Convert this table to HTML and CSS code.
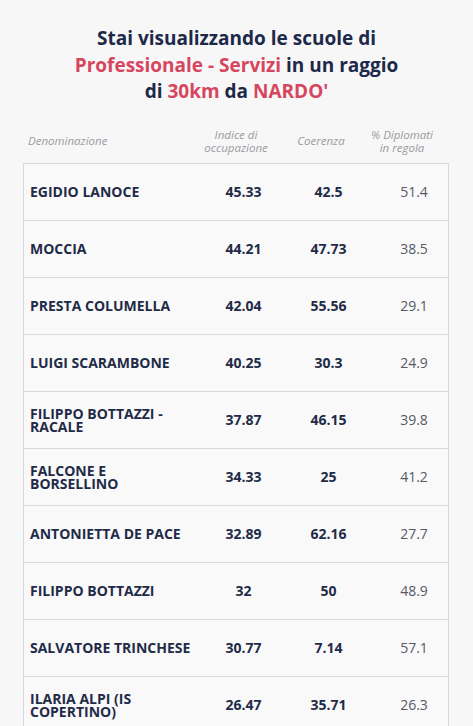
FILE: index.html
```html
<!DOCTYPE html>
<html lang="it">
<head>
    <meta charset="UTF-8">
    <meta name="viewport" content="width=device-width, initial-scale=1.0">
    <title>Scuole vicine</title>
    <link rel="stylesheet" href="styles.css">
</head>
<body>
    <h1 class="title">
        Stai visualizzando le scuole di<br>
        <span class="accent">Professionale - Servizi</span> in un raggio<br>
        di <span class="accent">30km</span> da <span class="accent">NARDO'</span>
    </h1>

    <div class="table">
        <div class="table-head">
            <div class="th th-name">Denominazione</div>
            <div class="th">Indice di<br>occupazione</div>
            <div class="th">Coerenza</div>
            <div class="th">% Diplomati<br>in regola</div>
        </div>

        <div class="table-body">
            <div class="row">
                <div class="name">EGIDIO LANOCE</div>
                <div class="val">45.33</div>
                <div class="val">42.5</div>
                <div class="val val-light">51.4</div>
            </div>
            <div class="row">
                <div class="name">MOCCIA</div>
                <div class="val">44.21</div>
                <div class="val">47.73</div>
                <div class="val val-light">38.5</div>
            </div>
            <div class="row">
                <div class="name">PRESTA COLUMELLA</div>
                <div class="val">42.04</div>
                <div class="val">55.56</div>
                <div class="val val-light">29.1</div>
            </div>
            <div class="row">
                <div class="name">LUIGI SCARAMBONE</div>
                <div class="val">40.25</div>
                <div class="val">30.3</div>
                <div class="val val-light">24.9</div>
            </div>
            <div class="row">
                <div class="name">FILIPPO BOTTAZZI - RACALE</div>
                <div class="val">37.87</div>
                <div class="val">46.15</div>
                <div class="val val-light">39.8</div>
            </div>
            <div class="row">
                <div class="name">FALCONE E BORSELLINO</div>
                <div class="val">34.33</div>
                <div class="val">25</div>
                <div class="val val-light">41.2</div>
            </div>
            <div class="row">
                <div class="name">ANTONIETTA DE PACE</div>
                <div class="val">32.89</div>
                <div class="val">62.16</div>
                <div class="val val-light">27.7</div>
            </div>
            <div class="row">
                <div class="name">FILIPPO BOTTAZZI</div>
                <div class="val">32</div>
                <div class="val">50</div>
                <div class="val val-light">48.9</div>
            </div>
            <div class="row">
                <div class="name">SALVATORE TRINCHESE</div>
                <div class="val">30.77</div>
                <div class="val">7.14</div>
                <div class="val val-light">57.1</div>
            </div>
            <div class="row">
                <div class="name">ILARIA ALPI (IS COPERTINO)</div>
                <div class="val">26.47</div>
                <div class="val">35.71</div>
                <div class="val val-light">26.3</div>
            </div>
        </div>
    </div>
</body>
</html>
```

FILE: styles.css
```css
/* pagina */
body {
    margin: 0;
    padding: 0;
    background: #f7f7f8;
    font-family: 'Open Sans', 'Liberation Sans', sans-serif;
    color: #1f2b47;
}

/* titolo */
.title {
    margin: 25px 0 0;
    font-size: 19px;
    line-height: 26.5px;
    font-weight: 700;
    text-align: center;
    color: #1d2948;
}

.accent {
    color: #d6465f;
}

/* tabella */
.table {
    margin: 0 24px 0 23px;
}

.table-head {
    display: grid;
    grid-template-columns: 1fr 102px 68px 94px;
    align-items: center;
    height: 30px;
    margin-top: 21px;
    margin-bottom: 7px;
}

.th {
    font-size: 11.5px;
    line-height: 13px;
    font-style: italic;
    color: #9a9a9e;
    text-align: center;
}

.th-name {
    text-align: left;
    padding-left: 5px;
}

.table-body {
    border: 1px solid #d8d8da;
    border-bottom: none;
}

.row {
    display: grid;
    grid-template-columns: 1fr 67px 103px 68px;
    align-items: center;
    height: 56px;
    border-bottom: 1px solid #d8d8da;
    background: #f9f9fa;
}

.name {
    padding-left: 6px;
    padding-right: 18px;
    font-size: 14px;
    line-height: 13px;
    font-weight: 700;
    color: #1f2b47;
}

.val {
    font-size: 14px;
    font-weight: 700;
    text-align: center;
    color: #1f2b47;
}

.val-light {
    font-weight: 400;
    color: #555a66;
}
```
